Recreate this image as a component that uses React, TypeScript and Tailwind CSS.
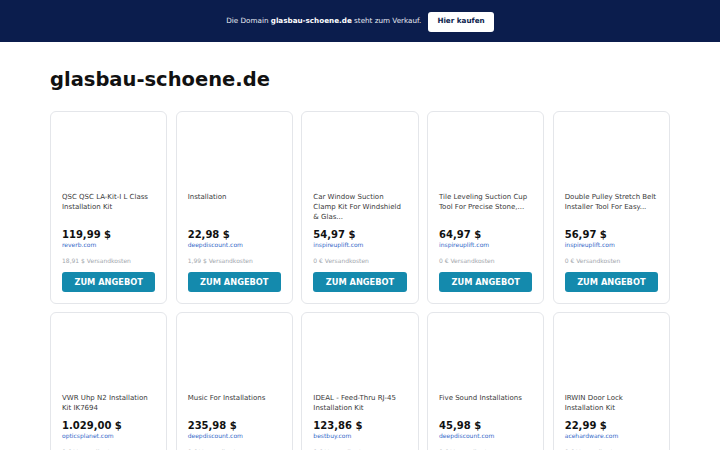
import React from 'react';

interface Offer {
  title: string;
  price: string;
  shop: string;
  shipping: string;
}

const offers: Offer[] = [
  { title: 'QSC QSC LA-Kit-I L Class Installation Kit', price: '119,99 $', shop: 'reverb.com', shipping: '18,91 $ Versandkosten' },
  { title: 'Installation', price: '22,98 $', shop: 'deepdiscount.com', shipping: '1,99 $ Versandkosten' },
  { title: 'Car Window Suction Clamp Kit For Windshield & Glas...', price: '54,97 $', shop: 'inspireuplift.com', shipping: '0 € Versandkosten' },
  { title: 'Tile Leveling Suction Cup Tool For Precise Stone,...', price: '64,97 $', shop: 'inspireuplift.com', shipping: '0 € Versandkosten' },
  { title: 'Double Pulley Stretch Belt Installer Tool For Easy...', price: '56,97 $', shop: 'inspireuplift.com', shipping: '0 € Versandkosten' },
  { title: 'VWR Uhp N2 Installation Kit IK7694', price: '1.029,00 $', shop: 'opticsplanet.com', shipping: '0 € Versandkosten' },
  { title: 'Music For Installations', price: '235,98 $', shop: 'deepdiscount.com', shipping: '0 € Versandkosten' },
  { title: 'IDEAL - Feed-Thru RJ-45 Installation Kit', price: '123,86 $', shop: 'bestbuy.com', shipping: '0 € Versandkosten' },
  { title: 'Five Sound Installations', price: '45,98 $', shop: 'deepdiscount.com', shipping: '0 € Versandkosten' },
  { title: 'IRWIN Door Lock Installation Kit', price: '22,99 $', shop: 'acehardware.com', shipping: '0 € Versandkosten' },
];

const OfferCard: React.FC<Offer> = ({ title, price, shop, shipping }) => (
  <div className="flex flex-col rounded-[6px] border border-[#e4e6ea] bg-white p-[11px]">
    <div className="mb-2 h-[61px]" />
    <p className="flex-grow text-[7px] leading-[10px] text-[#3a3a3a]">{title}</p>
    <p className="mt-[7px] text-[10px] font-bold leading-[12px] text-[#111]">{price}</p>
    <a href="#" className="text-[6px] leading-[8px] text-[#3569c9]">{shop}</a>
    <p className="mt-2 text-[6px] leading-[8px] text-[#a3a7ae]">{shipping}</p>
    <button className="mt-[6.5px] flex h-[20px] w-full items-center justify-center rounded-[3px] bg-[#148aad] text-[8.25px] font-bold text-white">
      ZUM ANGEBOT
    </button>
  </div>
);

export default function App() {
  return (
    <div className="min-h-[450px] bg-white font-['DejaVu_Sans',sans-serif]">
      <div className="flex h-[42px] items-center justify-center gap-[7px] bg-[#0b1d4d]">
        <span className="text-[7.2px] text-[#e8ebf2]">
          Die Domain <b className="text-white">glasbau-schoene.de</b> steht zum Verkauf.
        </span>
        <button className="mt-[1px] flex h-[20px] items-center rounded-[3px] bg-white px-[9px] text-[7.2px] font-bold text-[#0b1d4d]">
          Hier kaufen
        </button>
      </div>
      <main className="px-[50px] pt-[26px]">
        <h1 className="mb-[20px] text-[19.5px] font-bold leading-[1.2] text-[#111]">glasbau-schoene.de</h1>
        <div className="grid grid-cols-5 gap-x-[8.4px] gap-y-[8.6px]">
          {offers.map((o, i) => (
            <OfferCard key={i} {...o} />
          ))}
        </div>
      </main>
    </div>
  );
}
